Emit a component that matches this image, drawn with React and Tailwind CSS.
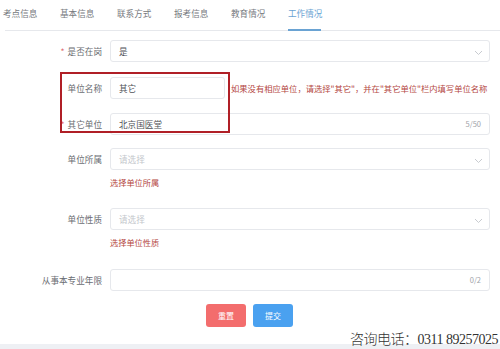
import React from 'react';

const tabs = ['考点信息', '基本信息', '联系方式', '报考信息', '教育情况', '工作情况'];

const Chevron = () => (
  <svg width="9" height="6" viewBox="0 0 9 6" className="absolute right-[6px] top-[9px]">
    <path d="M1 1 L4.5 4.5 L8 1" fill="none" stroke="#c8cbd0" strokeWidth="1" />
  </svg>
);

const Label = ({ children, required }) => (
  <div className="relative w-[110px] shrink-0 pr-[8px] text-right text-[8.6px] leading-[22px] text-[#6a6d72]">
    {required && <span className="mr-[3px] text-[#e07070]">*</span>}
    {children}
  </div>
);

const Box = ({ children, className = '' }) => (
  <div className={`relative h-[22px] shrink-0 rounded-[3px] border border-[#e6e8ec] bg-white px-[8px] text-[8.6px] leading-[20px] ${className}`}>
    {children}
  </div>
);

const Hint = ({ children }) => (
  <div className="ml-[110px] mt-[6px] text-[8.2px] leading-[12px] text-[#b4473f]">{children}</div>
);

const App = () => {
  return (
    <div className="relative h-[349px] w-[500px] overflow-hidden bg-white font-['Noto_Sans_CJK_SC','Liberation_Sans',sans-serif]">
      {/* tabs */}
      <div className="ml-[5px] flex h-[31px] items-end border-b border-[#e6e8ec]">
        {tabs.map((t, i) => (
          <div
            key={t}
            className={`relative h-[30px] text-[8.6px] leading-[26px] ${i === 0 ? 'ml-[-2px] mr-[15px]' : 'mr-[15px]'} w-[42px] ${i === 5 ? 'text-[#6aa3d3]' : 'text-[#777a80]'}`}
          >
            {t}
            {i === 5 && <div className="absolute bottom-[-1px] left-0 h-[2px] w-[33px] bg-[#6aa3d3]" />}
          </div>
        ))}
      </div>

      <div className="pr-[10px] pt-[9px]">
        <div className="flex">
          <Label required>是否在岗</Label>
          <Box className="flex-1 text-[#505257]">是<Chevron /></Box>
        </div>

        <div className="mt-[15px] flex items-center">
          <Label>单位名称</Label>
          <Box className="w-[115px] text-[#505257]">其它</Box>
          <div className="ml-[6px] whitespace-nowrap text-[8.3px] text-[#b4473f]">
            如果没有相应单位，请选择"其它"，并在"其它单位"栏内填写单位名称
          </div>
        </div>

        <div className="mt-[14px] flex">
          <Label required>其它单位</Label>
          <Box className="flex-1 text-[#505257]">
            北京国医堂
            <span className="absolute right-[8px] top-0 text-[7.5px] text-[#a0a3a8]">5/50</span>
          </Box>
        </div>

        <div className="mt-[13px] flex">
          <Label>单位所属</Label>
          <Box className="flex-1 text-[#c4c7cc]">请选择<Chevron /></Box>
        </div>
        <Hint>选择单位所属</Hint>

        <div className="mt-[20px] flex">
          <Label>单位性质</Label>
          <Box className="flex-1 text-[#c4c7cc]">请选择<Chevron /></Box>
        </div>
        <Hint>选择单位性质</Hint>

        <div className="mt-[21px] flex">
          <Label>从事本专业年限</Label>
          <Box className="flex-1">
            <span className="absolute right-[8px] top-0 text-[7.5px] text-[#a0a3a8]">0/2</span>
          </Box>
        </div>

        <div className="mt-[13px] flex justify-center gap-[7px] pl-[9px]">
          <button className="h-[23px] w-[40px] rounded-[3px] bg-[#f36d6d] text-[8px] text-white">重置</button>
          <button className="h-[23px] w-[40px] rounded-[3px] bg-[#4aa1f0] text-[8px] text-white">提交</button>
        </div>
      </div>

      {/* annotation box */}
      <div className="absolute left-[60px] top-[72px] h-[61px] w-[170px] border-2 border-[#b01f26]" />

      {/* bottom band */}
      <div className="absolute bottom-0 left-0 h-[5px] w-full bg-[#eef0f4]" />

      {/* watermark */}
      <div className="absolute bottom-[1px] right-[2px] whitespace-nowrap font-['Liberation_Serif','Noto_Sans_CJK_SC',serif] text-[14px] font-light leading-[16px] tracking-[-0.5px] text-[#333]">
        咨询电话：0311 89257025
      </div>
    </div>
  );
};

export default App;
